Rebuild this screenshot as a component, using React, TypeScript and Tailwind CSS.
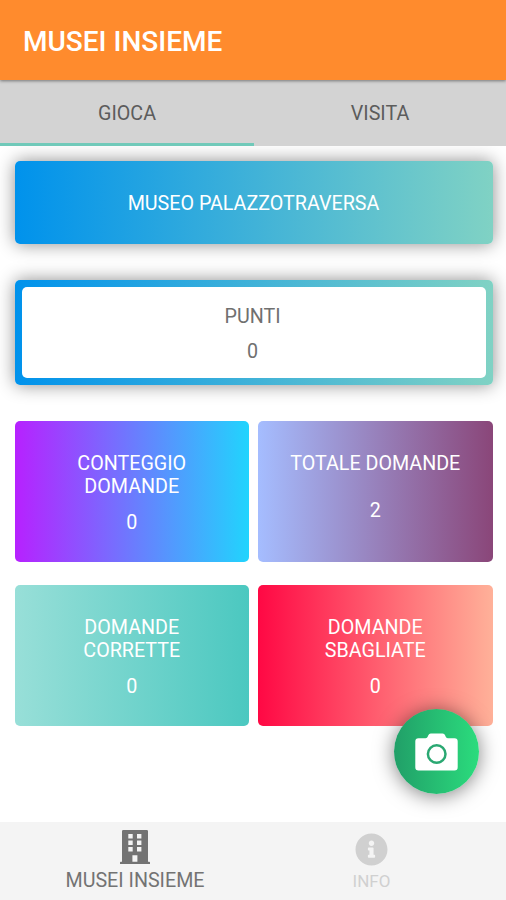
import { FaInfoCircle } from "react-icons/fa";

function CameraIcon() {
  return (
    <svg viewBox="0 0 43 38" className="h-[38px] w-[43px]" fill="none">
      <path
        fill="white"
        d="M3.5 5.2H10.6Q12.2 5.2 12.8 3.6L13.2 2.4Q13.9 .6 15.8 .6H27.6Q29.5 .6 30.2 2.4L30.6 3.6Q31.2 5.2 32.8 5.2H39.5Q42.7 5.2 42.7 8.4V34.2Q42.7 37.4 39.5 37.4H3.5Q.3 37.4 .3 34.2V8.4Q.3 5.2 3.5 5.2Z"
      />
      <circle cx="21.7" cy="21" r="8.8" stroke="#2aa872" strokeWidth="2.5" />
    </svg>
  );
}

function BuildingIcon() {
  return (
    <svg viewBox="0 0 30 34" className="h-[34px] w-[30px]" fill="currentColor">
      <path
        fillRule="evenodd"
        d="M3.2 0H26.8Q28 0 28 1.2V31.8H29.2Q30 31.8 30 32.6V34H0V32.6Q0 31.8 .8 31.8H2V1.2Q2 0 3.2 0ZM8.3 4V8.4H12.7V4ZM17 4V8.4H21.4V4ZM8.3 10.5V14.9H12.7V10.5ZM17 10.5V14.9H21.4V10.5ZM8.3 17V21.4H12.7V17ZM17 17V21.4H21.4V17ZM12.4 25.3V31.8H17.4V25.3Z"
      />
    </svg>
  );
}

type StatProps = { lines: string[]; value: number; tone: string; offset: string };

function StatCard({ lines, value, tone, offset }: StatProps) {
  return (
    <div className={`flex h-[141px] flex-col items-center rounded-[5px] pt-[31px] text-center text-white ${tone}`}>
      <div className="leading-[23.4px]">
        {lines.map((line) => (
          <div key={line}>{line}</div>
        ))}
      </div>
      <div className={`leading-[23px] ${offset}`}>{value}</div>
    </div>
  );
}

export default function App() {
  return (
    <div className="relative flex h-[900px] w-[506px] flex-col overflow-hidden bg-white font-[Roboto,sans-serif] text-[19.7px]">
      <header className="z-10 flex h-[80px] shrink-0 items-center bg-[#ff8b2d] pt-[3px] pl-[23px] text-[28px] font-medium text-white shadow-[0_1px_3px_rgba(0,0,0,0.45)]">
        <h1>MUSEI INSIEME</h1>
      </header>

      <nav className="z-[5] grid h-[66px] shrink-0 grid-cols-[254px_1fr] bg-[#d3d3d3] text-[#5c5c5c]">
        <button className="border-b-[3px] border-[#70c9b9] pt-[5px]">GIOCA</button>
        <button className="border-b-[3px] border-transparent pt-[5px]">VISITA</button>
      </nav>

      <main className="flex-1 pt-[15px] pr-[13.5px] pl-[14.5px]">
        <div className="flex h-[83px] items-center justify-center rounded-[5px] bg-linear-to-r/srgb from-[#0092ec] to-[#80d2c4] pt-[3px] text-white shadow-[0_0_18px_rgba(0,0,0,0.45)]">
          MUSEO PALAZZOTRAVERSA
        </div>

        <div className="mt-[36px] h-[105px] rounded-[5px] bg-linear-to-r/srgb from-[#0092ec] to-[#80d2c4] p-[7px] shadow-[0_0_18px_rgba(0,0,0,0.45)]">
          <div className="flex h-full flex-col items-center rounded-[5px] bg-white pt-[18px] pr-[2px] leading-[23px] text-[#707070]">
            <div>PUNTI</div>
            <div className="mt-[12px]">0</div>
          </div>
        </div>

        <div className="mt-[36px] grid grid-cols-2 gap-x-[9px] gap-y-[23px]">
          <StatCard lines={["CONTEGGIO", "DOMANDE"]} value={0} offset="mt-[12px]" tone="bg-linear-to-r/srgb from-[#b721ff] to-[#21d4fd]" />
          <StatCard lines={["TOTALE DOMANDE"]} value={2} offset="mt-[24px]" tone="bg-linear-to-r/srgb from-[#a5bdff] to-[#8a4679]" />
          <StatCard lines={["DOMANDE", "CORRETTE"]} value={0} offset="mt-[12px]" tone="bg-linear-to-r/srgb from-[#98dfd8] to-[#4bc8c0]" />
          <StatCard lines={["DOMANDE", "SBAGLIATE"]} value={0} offset="mt-[12px]" tone="bg-linear-to-r/srgb from-[#ff0844] to-[#ffb199]" />
        </div>
      </main>

      <button className="absolute top-[709px] left-[394px] flex size-[85px] items-center justify-center rounded-full bg-linear-to-r/srgb from-[#219f68] to-[#2bdc7d] shadow-[0_2px_20px_rgba(0,0,0,0.5)]">
        <CameraIcon />
      </button>

      <footer className="flex h-[78px] shrink-0 bg-[#f4f4f4]">
        <div className="flex w-[270px] flex-col items-center pt-[8px] text-[#737373]">
          <BuildingIcon />
          <span className="mt-[5px] leading-[24px]">MUSEI INSIEME</span>
        </div>
        <div className="flex w-[203px] flex-col items-center pt-[11px] text-[#d0d0d0]">
          <FaInfoCircle className="size-[33px]" />
          <span className="mt-[3px] text-[17px] leading-[24px]">INFO</span>
        </div>
      </footer>
    </div>
  );
}
